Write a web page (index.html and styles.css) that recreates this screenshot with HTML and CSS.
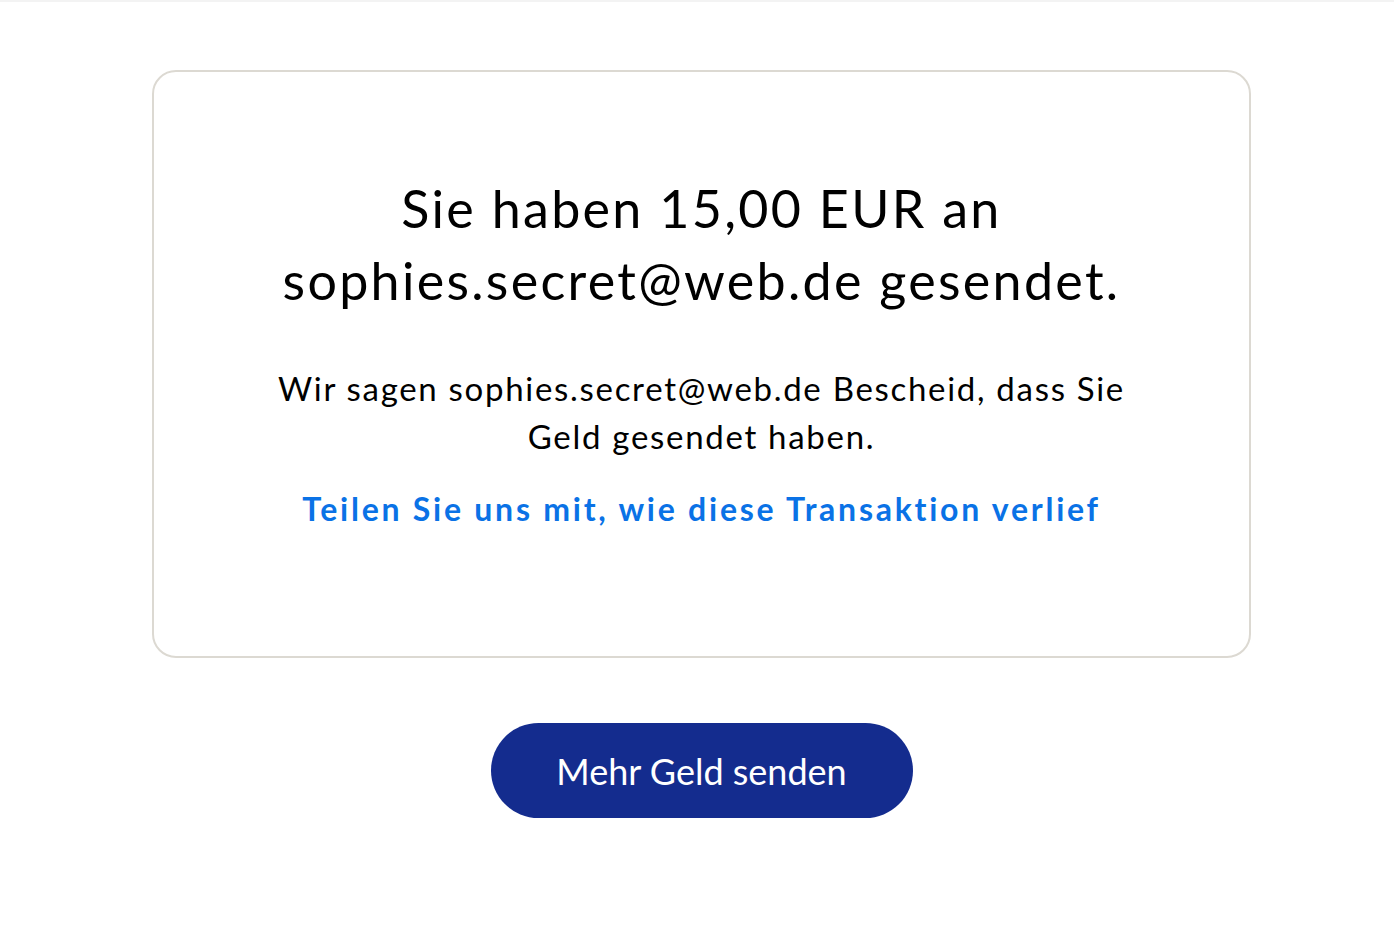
FILE: index.html
```html
<!DOCTYPE html>
<html lang="de">
<head>
<meta charset="utf-8">
<title>Geld gesendet</title>
<link rel="stylesheet" href="styles.css">
</head>
<body>
<div class="topline"></div>
<main class="page">
  <section class="card">
    <h1 class="title">Sie haben 15,00 EUR an<br>sophies.secret@web.de gesendet.</h1>
    <p class="info">Wir sagen sophies.secret@web.de Bescheid, dass Sie<br>Geld gesendet haben.</p>
    <a class="feedback" href="#">Teilen Sie uns mit, wie diese Transaktion verlief</a>
  </section>
  <div class="actions">
    <button class="primary" type="button">Mehr Geld senden</button>
  </div>
</main>
</body>
</html>
```
FILE: styles.css
```css
html, body {
  margin: 0;
  padding: 0;
  background: #ffffff;
  font-family: Lato, "Noto Sans", "Liberation Sans", sans-serif;
  color: #000000;
}

.topline {
  height: 2px;
  background: #f3f3f3;
}

.page {
  width: 1099px;
  margin-left: 152px;
  padding-top: 68px;
}

.card {
  box-sizing: border-box;
  height: 588px;
  border: 2px solid #dcd9d2;
  border-radius: 24px;
  padding-top: 100px;
  display: flex;
  flex-direction: column;
  align-items: center;
  text-align: center;
}

.title {
  margin: 0;
  font-size: 52px;
  line-height: 72px;
  font-weight: 400;
  letter-spacing: 2.3px;
}

.info {
  margin: 48px 0 0;
  font-size: 33px;
  line-height: 48px;
  letter-spacing: 1.7px;
}

.feedback {
  margin-top: 25px;
  font-size: 32px;
  line-height: 48px;
  font-weight: 700;
  letter-spacing: 2.75px;
  color: #0a72e6;
  text-decoration: none;
}

.actions {
  display: flex;
  justify-content: center;
  padding-top: 65px;
}

.primary {
  width: 422px;
  height: 95px;
  border: none;
  border-radius: 48px;
  background: #142c8e;
  color: #ffffff;
  font-family: inherit;
  font-size: 36px;
  cursor: pointer;
}
```
